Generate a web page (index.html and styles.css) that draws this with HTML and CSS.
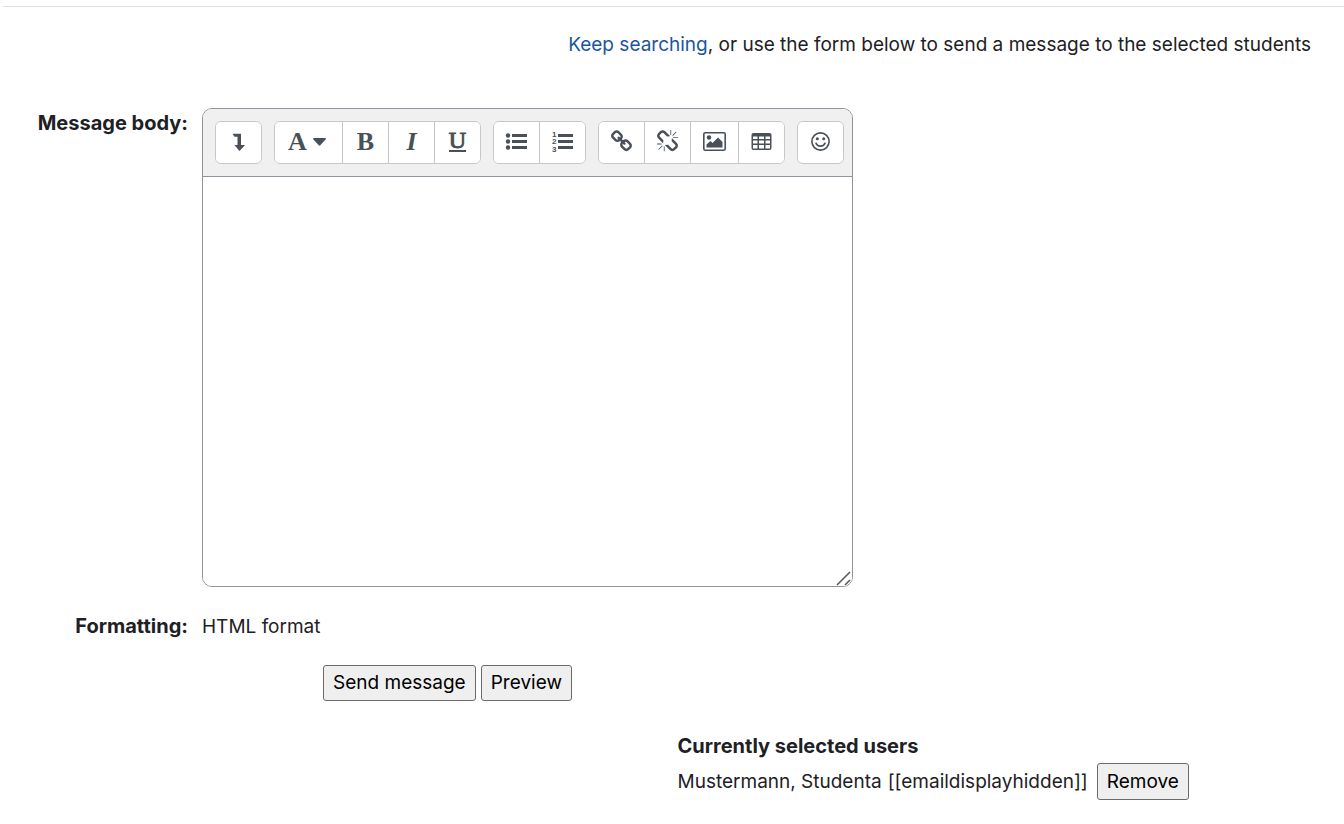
FILE: index.html
```html
<!DOCTYPE html>
<html lang="en">
<head>
<meta charset="utf-8">
<meta name="viewport" content="width=device-width, initial-scale=1">
<title>Send message</title>
<link rel="stylesheet" href="styles.css">
</head>
<body>
<main class="page">
  <p class="intro"><a href="#search">Keep searching</a>, or use the form below to send a message to the selected students</p>

  <form class="message-form">
    <div class="fields">
      <label class="field-label" for="message">Message body:</label>
      <div class="editor">
        <div class="toolbar" role="toolbar" aria-label="Text formatting">
          <div class="group">
            <button type="button" class="tool" aria-label="Show more buttons">
              <svg class="icon" viewBox="0 0 23 23"><path d="M5.500 3.700h8.500V15h4L13 20.500Q12.500 21 12 20.500L7.500 15h3V6.700H7.500z"/></svg>
            </button>
          </div>
          <div class="group">
            <button type="button" class="tool tool-styles" aria-label="Paragraph styles"><span class="letter">A</span><svg class="caret" viewBox="0 0 13 8"><path d="M1 0h11q1 0 1 1L7.500 7q-1 1-2 0L0 1q0-1 1-1z"/></svg></button>
            <button type="button" class="tool" aria-label="Bold"><span class="letter">B</span></button>
            <button type="button" class="tool" aria-label="Italic"><span class="letter letter-italic">I</span></button>
            <button type="button" class="tool" aria-label="Underline"><span class="letter letter-underline">U</span></button>
          </div>
          <div class="group">
            <button type="button" class="tool" aria-label="Unordered list">
              <svg class="icon" viewBox="0 0 23 23"><circle cx="3" cy="5.500" r="2.200"/><circle cx="3" cy="11.500" r="2.200"/><circle cx="3" cy="17.500" r="2.200"/><path d="M7 4h15v3H7zM7 10h15v3H7zM7 16h15v3H7z"/></svg>
            </button>
            <button type="button" class="tool" aria-label="Ordered list">
              <svg class="icon" viewBox="0 0 23 23"><path d="M7 4h15v3H7zM7 10h15v3H7zM7 16h15v3H7z"/><text class="digit" x="1" y="7">1</text><text class="digit" x="1" y="14">2</text><text class="digit" x="1" y="22">3</text></svg>
            </button>
          </div>
          <div class="group">
            <button type="button" class="tool" aria-label="Link">
              <svg class="icon" viewBox="0 0 1792 1792"><path d="M1520 1216q0-40-28-68l-208-208q-28-28-68-28-42 0-72 32 3 3 19 18.500t21.500 21.500 15 19 13 25.500 3.500 27.500q0 40-28 68t-68 28q-15 0-27.500-3.500t-25.500-13-19-15-21.500-21.500-18.500-19q-33 31-33 73 0 40 28 68l206 207q27 27 68 27 40 0 68-26l147-146q28-28 28-67zm-703-705q0-40-28-68l-206-207q-28-28-68-28-39 0-68 27l-147 146q-28 28-28 67 0 40 28 68l208 208q27 27 68 27 42 0 72-31-3-3-19-18.500t-21.500-21.500-15-19-13-25.500-3.500-27.500q0-40 28-68t68-28q15 0 27.500 3.500t25.500 13 19 15 21.500 21.500 18.500 19q33-31 33-73zm895 705q0 120-85 203l-147 146q-83 83-203 83-121 0-204-85l-206-207q-83-83-83-203 0-123 88-209l-88-88q-86 88-208 88-120 0-204-84l-208-208q-84-84-84-204t85-203l147-146q83-83 203-83 121 0 204 85l206 207q83 83 83 203 0 123-88 209l88 88q86-88 208-88 120 0 204 84l208 208q84 84 84 204z"/></svg>
            </button>
            <button type="button" class="tool" aria-label="Unlink">
              <svg class="icon" viewBox="0 0 1792 1792"><path d="M503 1271l-256 256q-10 9-23 9-12 0-23-9-9-10-9-23t9-23l256-256q10-9 23-9t23 9q9 10 9 23t-9 23zm169 41v320q0 14-9 23t-23 9-23-9-9-23v-320q0-14 9-23t23-9 23 9 9 23zm-224-224q0 14-9 23t-23 9h-320q-14 0-23-9t-9-23 9-23 23-9h320q14 0 23 9t9 23zm1264 128q0 120-85 203l-147 146q-83 83-203 83-121 0-204-85l-334-335q-21-21-42-56l239-18 273 274q28 28 68 28.500t68-27.500l147-146q28-28 28-67 0-40-28-68l-274-275 18-239q35 21 56 42l336 336q84 86 84 204zm-617-724l-239 18-273-274q-28-28-68-28-39 0-68 27l-147 146q-28 28-28 67 0 40 28 68l274 274-18 240q-35-21-56-42l-336-336q-84-86-84-204 0-120 85-203l147-146q83-83 203-83 121 0 204 85l334 335q21 21 42 56zm633 84q0 14-9 23t-23 9h-320q-14 0-23-9t-9-23 9-23 23-9h320q14 0 23 9t9 23zm-544-544v320q0 14-9 23t-23 9-23-9-9-23v-320q0-14 9-23t23-9 23 9 9 23zm407 151l-256 256q-11 9-23 9t-23-9q-9-10-9-23t9-23l256-256q10-9 23-9t23 9q9 10 9 23t-9 23z"/></svg>
            </button>
            <button type="button" class="tool" aria-label="Insert image">
              <svg class="icon icon-wide" viewBox="0 0 25 23"><rect x="1.800" y="2.800" width="21.400" height="17.400" rx="1.500" fill="none" stroke="currentColor" stroke-width="1.600"/><circle cx="7" cy="7.500" r="2.200"/><path d="M4.500 17.500v-3L8.500 11l2 2 5.500-5.500 4.500 4.500v5.500z"/></svg>
            </button>
            <button type="button" class="tool" aria-label="Insert table">
              <svg class="icon" viewBox="0 0 23 23"><path fill-rule="evenodd" d="M3.500 3h16q2 0 2 2v13q0 2-2 2h-16q-2 0-2-2V5q0-2 2-2zM3 6.500V9h4.500V6.500zM9 6.500V9h5V6.500zM15.500 6.500V9H20V6.500zM3 10.500v3h4.500v-3zM9 10.500v3h5v-3zM15.500 10.500v3H20v-3zM3 15v3.500h4.500V15zM9 15v3.500h5V15zM15.500 15v3.500H20V15z"/></svg>
            </button>
          </div>
          <div class="group">
            <button type="button" class="tool" aria-label="Emoji picker">
              <svg class="icon" viewBox="0 0 23 23"><circle cx="11.500" cy="11.500" r="8.600" fill="none" stroke="currentColor" stroke-width="1.600"/><circle cx="8.300" cy="8.800" r="1.500"/><circle cx="14.700" cy="8.800" r="1.500"/><path d="M7 13.200c1.500 3.900 7.500 3.900 9 0" fill="none" stroke="currentColor" stroke-width="1.600" stroke-linecap="round"/></svg>
            </button>
          </div>
        </div>
        <textarea class="content" id="message" name="message"></textarea>
        <svg class="grip" viewBox="0 0 16 16" aria-hidden="true"><path d="M1 15L14 2M9 15l5-5"/></svg>
      </div>

      <span class="field-label">Formatting:</span>
      <span>HTML format</span>
    </div>
    <div class="actions">
      <button type="submit" class="btn">Send message</button>
      <button type="button" class="btn">Preview</button>
    </div>
  </form>

  <section class="selected">
    <h2 class="selected-title">Currently selected users</h2>
    <div class="user"><span>Mustermann, Studenta</span><span>[[emaildisplayhidden]]</span><button type="button" class="btn btn-remove">Remove</button></div>
  </section>
</main>
</body>
</html>
```
FILE: styles.css
```css
* {
  box-sizing: border-box;
}

body {
  margin: 0;
  background: #fff;
  color: #1d2125;
  font-family: Inter, "Noto Sans", sans-serif;
  font-size: 19px;
  line-height: 32px;
}

.page {
  margin: 6px 0 0 3px;
  border-top: 1px solid #dee2e6;
  padding-top: 22px;
}

.intro {
  margin: 0 33px 47px 0;
  text-align: right;
}

.intro a {
  color: #1a569f;
  text-decoration: none;
}

.message-form {
  max-width: 889px;
}

.fields {
  display: grid;
  grid-template-columns: 185px minmax(0, 1fr);
  gap: 24px 14px;
  padding-right: 39px;
}

.field-label {
  font-size: 20px;
  font-weight: 700;
  line-height: 30px;
  text-align: right;
}

.editor {
  position: relative;
  border: 1px solid #8f959e;
  border-radius: 10px;
  overflow: hidden;
}

.toolbar {
  display: flex;
  flex-wrap: wrap;
  gap: 12px;
  padding: 12px 6px 12px 12px;
  background: #f0f0f0;
  border-bottom: 1px solid #8f959e;
}

.group {
  display: flex;
  border: 1px solid #c4c8cc;
  border-radius: 6px;
  background: #fff;
  overflow: hidden;
}

.tool {
  display: flex;
  align-items: center;
  justify-content: center;
  gap: 6px;
  min-width: 45px;
  height: 41px;
  border: 0;
  padding: 0 11px 2px;
  background: #fff;
  color: #495057;
}

.tool + .tool {
  box-sizing: content-box;
  min-width: 23px;
  height: 39px;
  border-left: 1px solid #c4c8cc;
}

.tool-styles {
  min-width: 67px;
  padding-right: 14px;
}

.icon {
  width: 23px;
  height: 23px;
  fill: currentColor;
}

.icon-wide {
  width: 25px;
}

.caret {
  width: 13px;
  height: 8px;
  fill: currentColor;
}

.letter {
  font: 700 26px/26px "Liberation Serif", serif;
}

.letter-italic {
  font-style: italic;
}

.letter-underline {
  border-bottom: 2px solid currentColor;
  font-size: 24px;
  font-weight: 400;
  line-height: 19px;
  -webkit-text-stroke: 1px currentColor;
}

.digit {
  font: 700 8px "Liberation Sans", sans-serif;
}

.content {
  display: block;
  width: 100%;
  height: 409px;
  border: 0;
  padding: 8px 12px;
  outline: 0;
  resize: none;
  font: inherit;
  color: inherit;
}

.grip {
  position: absolute;
  right: 0;
  bottom: 0;
  width: 16px;
  height: 16px;
  fill: none;
  stroke: #555;
  stroke-width: 1.5;
}

.actions {
  display: flex;
  justify-content: center;
  gap: 5px;
  margin-top: 22px;
}

.btn {
  height: 36px;
  border: 1px solid #6b6b6b;
  border-radius: 3px;
  padding: 0 9px;
  background: #efefef;
  color: #000;
  font: inherit;
}

.selected {
  margin: 29px 0 0 50%;
  padding-left: 4px;
}

.selected-title {
  margin: 0 0 1px;
  font-size: 20px;
  font-weight: 700;
}

.user {
  display: flex;
  align-items: center;
  gap: 6px;
}

.btn-remove {
  height: 37px;
  margin-left: 3px;
}
```
